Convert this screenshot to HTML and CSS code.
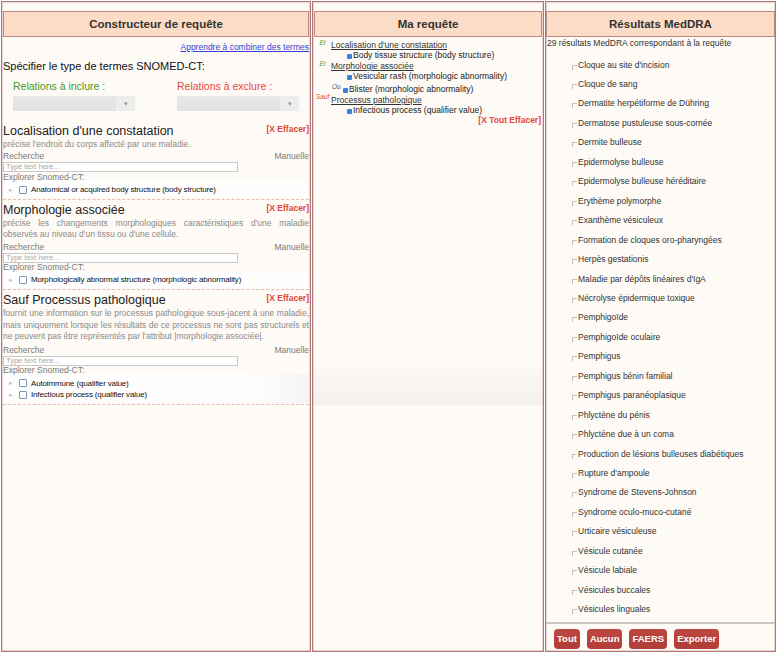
FILE: index.html
```html
<!DOCTYPE html>
<html lang="fr">
<head>
<meta charset="utf-8">
<title>MedDRA / SNOMED-CT</title>
<link rel="stylesheet" href="styles.css">
</head>
<body>
<div class="app">
  <section class="panel panel-left">
    <h2 class="phead">Constructeur de requête</h2>
    <div class="learn"><a href="#">Apprendre à combiner des termes</a></div>
    <div class="spec">Spécifier le type de termes SNOMED-CT:</div>
    <div class="rels">
      <div class="rel">
        <div class="rel-label inc">Relations à inclure :</div>
        <div class="sel"><span class="sel-main"></span><span class="sel-btn">▾</span></div>
      </div>
      <div class="rel">
        <div class="rel-label exc">Relations à exclure :</div>
        <div class="sel"><span class="sel-main"></span><span class="sel-btn">▾</span></div>
      </div>
    </div>

    <div class="attr attr-first">
      <div class="attr-head"><span class="attr-title">Localisation d'une constatation</span><span class="clear">[X Effacer]</span></div>
      <div class="desc">précise l'endroit du corps affecté par une maladie.</div>
      <div class="rech"><span>Recherche</span><span>Manuelle</span></div>
      <div class="input">Type text here...</div>
      <div class="explorer">Explorer Snomed-CT:</div>
      <div class="tree">
        <div class="node"><span class="tri">▸</span><span class="box"></span><span class="nlabel">Anatomical or acquired body structure (body structure)</span></div>
      </div>
    </div>

    <div class="attr">
      <div class="attr-head"><span class="attr-title">Morphologie associée</span><span class="clear">[X Effacer]</span></div>
      <div class="desc">précise les changements morphologiques caractéristiques d'une maladie observés au niveau d'un tissu ou d'une cellule.</div>
      <div class="rech"><span>Recherche</span><span>Manuelle</span></div>
      <div class="input">Type text here...</div>
      <div class="explorer">Explorer Snomed-CT:</div>
      <div class="tree">
        <div class="node"><span class="tri">▸</span><span class="box"></span><span class="nlabel">Morphologically abnormal structure (morphologic abnormality)</span></div>
      </div>
    </div>

    <div class="attr">
      <div class="attr-head"><span class="attr-title">Sauf Processus pathologique</span><span class="clear">[X Effacer]</span></div>
      <div class="desc">fournit une information sur le processus pathologique sous-jacent à une maladie, mais uniquement lorsque les résultats de ce processus ne sont pas structurels et ne peuvent pas être représentés par l'attribut |morphologie associée|.</div>
      <div class="rech rech-last"><span>Recherche</span><span>Manuelle</span></div>
      <div class="input">Type text here...</div>
      <div class="explorer">Explorer Snomed-CT:</div>
      <div class="tree tree-fade">
        <div class="node"><span class="tri">▸</span><span class="box"></span><span class="nlabel">Autoimmune (qualifier value)</span></div>
        <div class="node"><span class="tri">▸</span><span class="box"></span><span class="nlabel">Infectious process (qualifier value)</span></div>
      </div>
    </div>
  </section>

  <section class="panel panel-mid">
    <h2 class="phead">Ma requête</h2>
    <div class="query">
      <div class="q-group"><span class="conn et">Et</span><span class="q-title">Localisation d'une constatation</span></div>
      <div class="q-item"><span class="cb"></span>Body tissue structure (body structure)</div>

      <div class="q-group"><span class="conn et">Et</span><span class="q-title">Morphologie associée</span></div>
      <div class="q-item"><span class="cb"></span>Vesicular rash (morphologic abnormality)</div>
      <div class="q-item q-or"><span class="or">Ou</span><span class="cb"></span>Blister (morphologic abnormality)</div>

      <div class="q-group"><span class="conn sauf">Sauf</span><span class="q-title">Processus pathologique</span></div>
      <div class="q-item"><span class="cb"></span>Infectious process (qualifier value)</div>

      <div class="clear-all">[X Tout Effacer]</div>
    </div>
    <div class="mid-shade"></div>
  </section>

  <section class="panel panel-right">
    <h2 class="phead">Résultats MedDRA</h2>
    <div class="count">29 résultats MedDRA correspondant à la requête</div>
    <ul class="results">
      <li><span class="rb"></span>Cloque au site d'incision</li>
      <li><span class="rb"></span>Cloque de sang</li>
      <li><span class="rb"></span>Dermatite herpétiforme de Dühring</li>
      <li><span class="rb"></span>Dermatose pustuleuse sous-cornée</li>
      <li><span class="rb"></span>Dermite bulleuse</li>
      <li><span class="rb"></span>Epidermolyse bulleuse</li>
      <li><span class="rb"></span>Epidermolyse bulleuse héréditaire</li>
      <li><span class="rb"></span>Erythème polymorphe</li>
      <li><span class="rb"></span>Exanthème vésiculeux</li>
      <li><span class="rb"></span>Formation de cloques oro-pharyngées</li>
      <li><span class="rb"></span>Herpès gestationis</li>
      <li><span class="rb"></span>Maladie par dépôts linéaires d'IgA</li>
      <li><span class="rb"></span>Nécrolyse épidermique toxique</li>
      <li><span class="rb"></span>Pemphigoïde</li>
      <li><span class="rb"></span>Pemphigoïde oculaire</li>
      <li><span class="rb"></span>Pemphigus</li>
      <li><span class="rb"></span>Pemphigus bénin familial</li>
      <li><span class="rb"></span>Pemphigus paranéoplasique</li>
      <li><span class="rb"></span>Phlyctène du pénis</li>
      <li><span class="rb"></span>Phlyctène due à un coma</li>
      <li><span class="rb"></span>Production de lésions bulleuses diabétiques</li>
      <li><span class="rb"></span>Rupture d'ampoule</li>
      <li><span class="rb"></span>Syndrome de Stevens-Johnson</li>
      <li><span class="rb"></span>Syndrome oculo-muco-cutané</li>
      <li><span class="rb"></span>Urticaire vésiculeuse</li>
      <li><span class="rb"></span>Vésicule cutanée</li>
      <li><span class="rb"></span>Vésicule labiale</li>
      <li><span class="rb"></span>Vésicules buccales</li>
      <li><span class="rb"></span>Vésicules linguales</li>
    </ul>
    <div class="foot">
      <button class="btn">Tout</button>
      <button class="btn">Aucun</button>
      <button class="btn">FAERS</button>
      <button class="btn">Exporter</button>
    </div>
  </section>
</div>
</body>
</html>
```

FILE: styles.css
```css
html, body {
  margin: 0;
  padding: 0;
  background: #ffffff;
}
body {
  font-family: "Liberation Sans", Arial, Helvetica, sans-serif;
  color: #222;
}
.app {
  display: flex;
  gap: 1px;
  padding: 1px 0 0 1px;
}
.panel {
  box-sizing: border-box;
  height: 651px;
  border: 1px solid #b17878;
  box-shadow: inset 0 0 0 1px #ecd6d3;
  background: #fefaf5;
  display: flex;
  flex-direction: column;
  padding: 9px 1px 0;
  position: relative;
}
.panel-left { width: 310px; }
.panel-mid { width: 232px; }
.panel-right { width: 231px; padding-left: 0; padding-right: 0; }

.phead {
  margin: 0;
  flex: none;
  height: 26px;
  box-sizing: border-box;
  border: 1px solid #b98a7e;
  background: #fcdcc6;
  font-size: 11.5px;
  font-weight: bold;
  line-height: 24px;
  text-align: center;
  color: #333;
}

/* left panel */
.learn {
  text-align: right;
  font-size: 8.5px;
  line-height: 10px;
  margin-top: 5px;
}
.learn a { color: #3a3ad6; text-decoration: underline; }
.spec {
  font-size: 11px;
  line-height: 14px;
  margin-top: 7px;
  color: #111;
}
.rels {
  display: grid;
  grid-template-columns: 164px 1fr;
  padding-left: 10px;
  margin-top: 6.5px;
}
.rel-label {
  font-size: 10.5px;
  line-height: 13px;
}
.rel-label.inc { color: #3e9a2c; }
.rel-label.exc { color: #e6483c; }
.sel {
  display: flex;
  width: 122px;
  height: 15px;
  margin-top: 3.5px;
}
.sel-main {
  flex: 1;
  background: linear-gradient(#e9e9e9, #e2e2e2);
}
.sel-btn {
  width: 19px;
  background: #ededed;
  color: #999;
  font-size: 7px;
  line-height: 15px;
  text-align: center;
}

.attr {
  border-bottom: 1px dashed #e5bdb4;
  padding: 2px 0 0;
}
.attr-first { margin-top: 10px; }
.attr-head {
  display: flex;
  justify-content: space-between;
  align-items: flex-start;
  height: 16px;
}
.attr-title {
  font-size: 12.5px;
  line-height: 16px;
  color: #222;
}
.clear {
  font-size: 8.5px;
  font-weight: bold;
  line-height: 13px;
  color: #e0463a;
}
.desc {
  font-size: 8.5px;
  line-height: 11.3px;
  color: #8a8a8a;
  text-align: justify;
}
.rech {
  display: flex;
  justify-content: space-between;
  font-size: 8.5px;
  line-height: 11px;
  color: #7a7a7a;
  margin-top: 1px;
}
.rech-last { margin-top: 2.5px; }
.input {
  width: 235px;
  height: 10px;
  box-sizing: border-box;
  border: 1px solid #c9c9c9;
  background: #fff;
  font-size: 7.5px;
  line-height: 8px;
  color: #a8a8a8;
  padding-left: 2px;
}
.explorer {
  font-size: 8.5px;
  line-height: 8px;
  margin-top: 0.5px;
  color: #7a7a7a;
}
.tree {
  background: #fefefe;
  padding: 3px 0 2px;
  margin-bottom: 1.5px;
}
.tree-fade {
  background: linear-gradient(90deg, #fefefe 80%, #f4f4f4);
}
.node {
  display: flex;
  align-items: center;
  height: 11.7px;
  padding-left: 6px;
}
.tri {
  font-size: 7px;
  color: #c4c4c4;
  width: 10px;
}
.box {
  width: 6px;
  height: 6px;
  border: 1px solid #7f96bd;
  border-radius: 1px;
  background: #fff;
  margin-right: 4px;
}
.nlabel {
  font-size: 8px;
  letter-spacing: -0.15px;
  color: #111;
}

/* middle */
.query { padding-top: 1px; }
.q-group {
  display: flex;
  font-size: 8.5px;
  line-height: 9px;
  margin-top: 2.5px;
}
.conn {
  width: 17px;
  flex: none;
  text-align: center;
  font-style: italic;
  font-size: 6.5px;
  line-height: 7px;
  margin-top: -2px;
}
.conn.et { color: #4f9a3a; }
.conn.sauf { color: #e0463a; margin-top: -3px; }
.q-title {
  text-decoration: underline;
  color: #333;
}
.q-item {
  font-size: 8.5px;
  line-height: 10px;
  color: #222;
  padding-left: 33px;
}
.q-or {
  padding-left: 18px;
  margin-top: 0.5px;
}
.or {
  display: inline-block;
  width: 11px;
  font-size: 6.5px;
  font-style: italic;
  color: #555;
  vertical-align: 3px;
}
.cb {
  display: inline-block;
  width: 5px;
  height: 5px;
  background: #3b7fd9;
  border-radius: 1px;
  margin-right: 1px;
  vertical-align: -1px;
}
.clear-all {
  text-align: right;
  font-size: 8.5px;
  font-weight: bold;
  line-height: 10px;
  color: #e0463a;
  padding-right: 1px;
  margin-top: -0.5px;
}
.mid-shade {
  position: absolute;
  left: 0;
  right: 0;
  top: 359px;
  height: 44px;
  background: linear-gradient(rgba(0,0,0,0), rgba(0,0,0,0.045));
  pointer-events: none;
}

/* right */
.count {
  font-size: 8.5px;
  line-height: 11px;
  margin-top: 1px;
  padding-left: 1px;
  color: #333;
}
.results {
  list-style: none;
  margin: 5.8px 0 0;
  padding: 0 0 0 26px;
}
.results li {
  display: flex;
  align-items: center;
  height: 19.46px;
  font-size: 8.5px;
  color: #333;
}
.rb {
  width: 4px;
  height: 4px;
  border-top: 1px solid #c2c2c2;
  border-left: 1px solid #c2c2c2;
  margin-top: 5px;
  margin-right: 1px;
}
.foot {
  margin-top: 3.5px;
  border-top: 2px solid #c9c6c2;
  padding: 5px 0 0 8px;
  display: flex;
  gap: 7px;
}
.btn {
  height: 20px;
  padding: 0 3px;
  border: none;
  border-radius: 4px;
  background: linear-gradient(#bd4842, #b23d38);
  color: #fff;
  font-family: "Liberation Sans", Arial, sans-serif;
  font-size: 9.5px;
  font-weight: bold;
  line-height: 20px;
}
```
